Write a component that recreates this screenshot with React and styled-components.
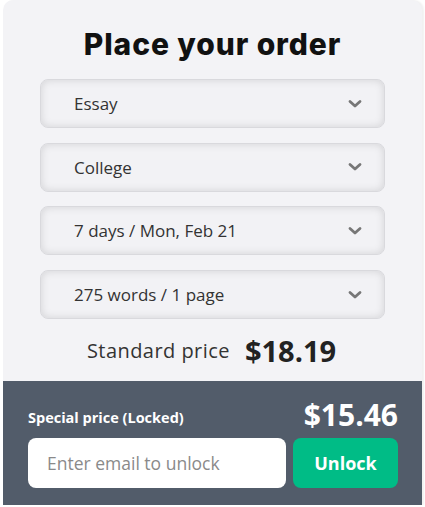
import React from "react";
import styled, { createGlobalStyle } from "styled-components";

const Global = createGlobalStyle`
  html, body { margin: 0; padding: 0; background: #ffffff; }
  body { font-family: "Open Sans", "Liberation Sans", sans-serif; }
  * { box-sizing: border-box; }
`;

const Page = styled.div`
  padding-left: 3px;
  width: 425px;
`;

const Card = styled.div`
  width: 419px;
  background: #f3f3f6;
  border-radius: 10px 10px 0 0;
  box-shadow: 2px 0 2px rgba(0, 0, 0, 0.06);
  overflow: hidden;
`;

const Top = styled.div`
  padding: 26px 37px 0 37px;
  display: flex;
  flex-direction: column;
  align-items: stretch;
`;

const Title = styled.h1`
  margin: 0 0 17px;
  font-family: "Inter", "Liberation Sans", sans-serif;
  font-weight: 800;
  font-size: 30px;
  line-height: 36px;
  color: #111;
  text-align: center;
  letter-spacing: 0.9px;
`;

const Selects = styled.div`
  display: flex;
  flex-direction: column;
  gap: 14.7px;
`;

const Select = styled.div`
  height: 49px;
  border: 1px solid #d9d9dd;
  border-radius: 8px;
  background: #f2f2f5;
  box-shadow: inset 0 0 9px rgba(0, 0, 0, 0.13);
  display: flex;
  align-items: center;
  justify-content: space-between;
  padding: 0 22px 0 33px;
  font-size: 17px;
  color: #333;
`;

const Chevron = () => (
  <svg width="14" height="10" viewBox="0 0 14 10">
    <path d="M2 2.5 L7 7 L12 2.5" fill="none" stroke="#777" strokeWidth="2.8" strokeLinecap="round" strokeLinejoin="round" />
  </svg>
);

const PriceRow = styled.div`
  height: 62px;
  display: flex;
  align-items: center;
  justify-content: center;
  gap: 15px;
  padding-right: 2px;
`;

const PriceLabel = styled.span`
  font-size: 20px;
  color: #333;
  letter-spacing: 0.45px;
`;

const PriceValue = styled.span`
  font-size: 29px;
  font-weight: 700;
  color: #222;
`;

const Panel = styled.div`
  background: #525c6a;
  padding: 14px 24px 17px 25px;
  display: flex;
  flex-direction: column;
  gap: 5px;
`;

const PanelHead = styled.div`
  height: 38px;
  display: flex;
  align-items: center;
  justify-content: space-between;
`;

const SpecialLabel = styled.span`
  color: #fff;
  font-weight: 700;
  font-size: 14.5px;
  margin-top: 6px;
`;

const SpecialValue = styled.span`
  color: #fff;
  font-weight: 700;
  font-size: 30px;
`;

const Form = styled.div`
  display: flex;
  gap: 7px;
  height: 50px;
`;

const Email = styled.input`
  width: 258px;
  height: 50px;
  border: none;
  border-radius: 8px;
  background: #fff;
  padding: 0 19px;
  font-family: "Open Sans", "Liberation Sans", sans-serif;
  font-size: 17.5px;
  color: #333;
  outline: none;
  &::placeholder { color: #8a8a8a; }
`;

const Button = styled.button`
  flex: 1;
  height: 50px;
  border: none;
  border-radius: 8px;
  background: #00bc86;
  color: #fff;
  font-family: "Open Sans", "Liberation Sans", sans-serif;
  font-weight: 700;
  font-size: 18px;
  cursor: pointer;
`;

const options = ["Essay", "College", "7 days / Mon, Feb 21", "275 words / 1 page"];

export default function App() {
  return (
    <Page>
      <Global />
      <Card>
        <Top>
          <Title>Place your order</Title>
          <Selects>
            {options.map((o) => (
              <Select key={o}>
                <span>{o}</span>
                <Chevron />
              </Select>
            ))}
          </Selects>
        </Top>
        <PriceRow>
          <PriceLabel>Standard price</PriceLabel>
          <PriceValue>$18.19</PriceValue>
        </PriceRow>
        <Panel>
          <PanelHead>
            <SpecialLabel>Special price (Locked)</SpecialLabel>
            <SpecialValue>$15.46</SpecialValue>
          </PanelHead>
          <Form>
            <Email placeholder="Enter email to unlock" />
            <Button>Unlock</Button>
          </Form>
        </Panel>
      </Card>
    </Page>
  );
}
